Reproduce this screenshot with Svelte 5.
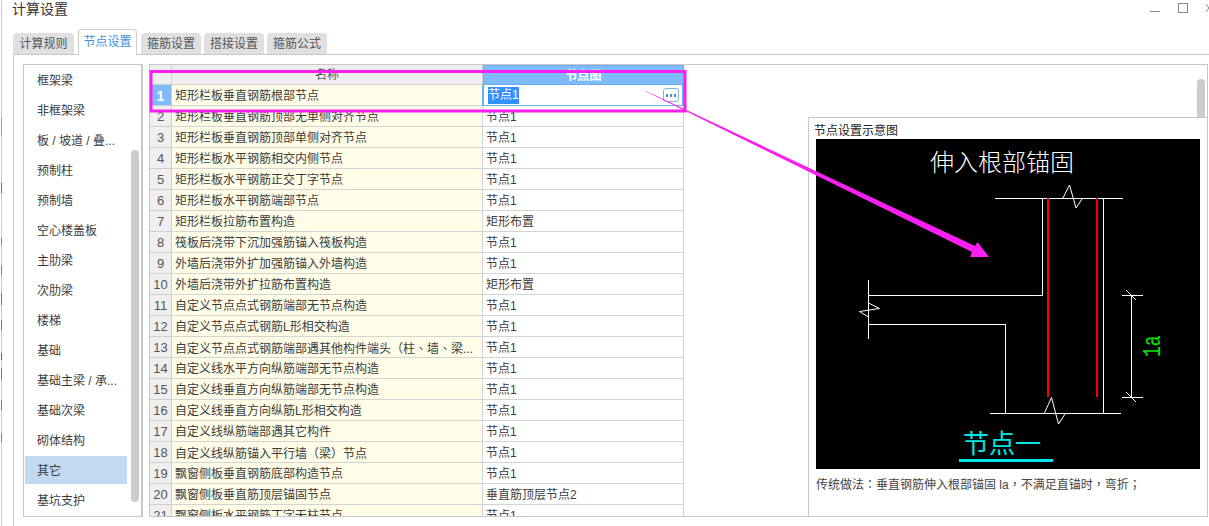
<script>
  const tabs = ['计算规则', '节点设置', '箍筋设置', '搭接设置', '箍筋公式'];
  const kinds = ['框架梁', '非框架梁', '板 / 坡道 / 叠...', '预制柱', '预制墙', '空心楼盖板', '主肋梁', '次肋梁', '楼梯', '基础', '基础主梁 / 承...', '基础次梁', '砌体结构', '其它', '基坑支护'];
  const rows = [
    ['矩形栏板垂直钢筋根部节点', '节点1'],
    ['矩形栏板垂直钢筋顶部无单侧对齐节点', '节点1'],
    ['矩形栏板垂直钢筋顶部单侧对齐节点', '节点1'],
    ['矩形栏板水平钢筋相交内侧节点', '节点1'],
    ['矩形栏板水平钢筋正交丁字节点', '节点1'],
    ['矩形栏板水平钢筋端部节点', '节点1'],
    ['矩形栏板拉筋布置构造', '矩形布置'],
    ['筏板后浇带下沉加强筋锚入筏板构造', '节点1'],
    ['外墙后浇带外扩加强筋锚入外墙构造', '节点1'],
    ['外墙后浇带外扩拉筋布置构造', '矩形布置'],
    ['自定义节点点式钢筋端部无节点构造', '节点1'],
    ['自定义节点点式钢筋L形相交构造', '节点1'],
    ['自定义节点点式钢筋端部遇其他构件端头（柱、墙、梁...', '节点1'],
    ['自定义线水平方向纵筋端部无节点构造', '节点1'],
    ['自定义线垂直方向纵筋端部无节点构造', '节点1'],
    ['自定义线垂直方向纵筋L形相交构造', '节点1'],
    ['自定义线纵筋端部遇其它构件', '节点1'],
    ['自定义线纵筋锚入平行墙（梁）节点', '节点1'],
    ['飘窗侧板垂直钢筋底部构造节点', '节点1'],
    ['飘窗侧板垂直筋顶层锚固节点', '垂直筋顶层节点2'],
    ['飘窗侧板水平钢筋丁字无柱节点', '节点1']
  ];

  // punctuation sits centred in the original font, the TC face does that too
  const parts = (s) => s.split(/([：，；、（）])/);
  const isPunct = (s) => /^[：，；、（）]$/.test(s);
</script>

{#snippet label(text)}
  {#each parts(text) as part}{#if isPunct(part)}<span class="punct">{part}</span>{:else}{part}{/if}{/each}
{/snippet}

<div class="window">
  <div class="edge"></div>
  <div class="main">
    <header class="titlebar">
      <span class="title">计算设置</span>
      <div class="controls">
        <svg width="59" height="16" viewBox="0 0 59 16" fill="none" stroke="#8a8a8a">
          <path d="M0 11.5H10" />
          <rect x="28.5" y="3.5" width="9" height="9" />
          <path d="M56 4L59 8L56 12" />
        </svg>
      </div>
    </header>

    <nav class="tabs">
      {#each tabs as tab, i}
        <div class="tab" class:active={i === 1}>{tab}</div>
      {/each}
    </nav>

    <section class="panel">
      <aside class="kinds">
        <ul>
          {#each kinds as kind}
            <li class:current={kind === '其它'}>{kind}</li>
          {/each}
        </ul>
        <div class="kinds-thumb"></div>
      </aside>

      <div class="content">
        <div class="grid">
          <div class="cell corner"></div>
          <div class="cell head">名称</div>
          <div class="cell head blue">节点图</div>
          {#each rows as row, i}
            <div class="cell num" class:on={i === 0}>{i + 1}</div>
            <div class="cell name">{@render label(row[0])}</div>
            {#if i === 0}
              <div class="cell value editing">
                <span class="selected">{row[1]}</span>
                <button class="more" aria-label="更多">
                  <svg width="10" height="3" viewBox="0 0 10 3" fill="#4a90d9">
                    <rect x="0" y="0" width="2" height="3" />
                    <rect x="4" y="0" width="2" height="3" />
                    <rect x="8" y="0" width="2" height="3" />
                  </svg>
                </button>
              </div>
            {:else}
              <div class="cell value">{row[1]}</div>
            {/if}
          {/each}
        </div>

        <div class="side">
          <div class="side-thumb"></div>
          <div class="preview">
            <div class="preview-title">节点设置示意图</div>
            <svg class="drawing" width="384" height="330" viewBox="816 139 384 330" shape-rendering="crispEdges">
              <rect x="816" y="139" width="384" height="330" fill="#000" />
              <text x="1002" y="171" class="cad-title">伸入根部锚固</text>
              <g fill="none" stroke="#fff" stroke-width="1">
                <path d="M995 198.5H1123M1042.5 198.5V295.5H868.5M868.5 280V339M868.5 324.5H1005.5V413.5M990 413.5H1121M1103.5 198.5V413.5" />
                <path d="M1131.5 295V397M1122 295.5H1143M1122 397.5H1143" />
              </g>
              <g fill="none" stroke="#fff" stroke-width="1" shape-rendering="auto">
                <path d="M1063 198L1069.5 185L1076 208L1082 199" />
                <path d="M868.5 303L879.5 308.5L859.5 311.5L868.5 317" />
                <path d="M1044.5 413L1051.5 397.5L1058.5 424L1065 414" />
                <path d="M1126 290L1136 300M1126 392L1136 402" />
              </g>
              <path d="M1048 198V397M1097 198V397" stroke="#f00" stroke-width="2" />
              <text x="0" y="0" transform="translate(1160 357) rotate(-90) scale(0.72 1)" class="cad-dim">1a</text>
              <text x="963" y="453" class="cad-name">节点一</text>
              <rect x="959" y="459" width="94" height="3" fill="#00e6e6" />
            </svg>
            <p class="note">{@render label('传统做法：垂直钢筋伸入根部锚固 la，不满足直锚时，弯折；')}</p>
          </div>
        </div>
      </div>
    </section>
  </div>

  <svg class="markup" width="1209" height="526" viewBox="0 0 1209 526">
    <rect x="151" y="71.5" width="534" height="39.5" fill="none" stroke="#f81ff0" stroke-width="3" />
    <path d="M646 91L975 246L977.5 242L989 257H970L972 252L646 91.6Z" fill="#f81ff0" />
  </svg>
</div>

<style>
  :global(body) {
    margin: 0;
    background: #fff;
  }

  .window {
    position: relative;
    display: flex;
    width: 1209px;
    height: 526px;
    overflow: hidden;
    background: #fff;
    color: #3c3c3c;
    font-family: "Liberation Sans", "Noto Sans CJK SC", sans-serif;
    font-size: 12px;
  }

  .edge {
    width: 1px;
    margin-left: 1px;
    background: linear-gradient(
      180deg,
      #c8c8c8 0 118px,
      #6aa5e0 118px 135px,
      #c8c8c8 135px 183px,
      #a8603a 183px 193px,
      #bcd3ee 193px 226px,
      #c8c8c8 226px 238px,
      #a07a50 238px 245px,
      #c8c8c8 245px 265px,
      #a87838 265px 275px,
      #c8c8c8 275px 293px,
      #5578b8 293px 305px,
      #c8c8c8 305px 320px,
      #5578b8 320px 330px,
      #c8c8c8 330px 353px,
      #806850 353px 360px,
      #c8c8c8 360px 368px,
      #a87838 368px 380px,
      #c8c8c8 380px 400px,
      #907860 400px 410px,
      #c8c8c8 410px 433px,
      #a87838 433px 442px,
      #c8c8c8 442px
    );
  }

  .main {
    flex: 1;
    display: flex;
    flex-direction: column;
    min-width: 0;
    padding-left: 11px;
  }

  .titlebar {
    display: flex;
    justify-content: space-between;
    height: 29px;
  }

  .title {
    margin-left: -1px;
    font-size: 14px;
    line-height: 19px;
    color: #333;
  }

  .controls svg {
    display: block;
  }

  .tabs {
    display: flex;
    align-items: flex-end;
    gap: 3px;
    height: 25px;
  }

  .tab {
    box-sizing: border-box;
    width: 60px;
    height: 21px;
    border-radius: 4px 4px 0 0;
    background: #e0e0e0;
    color: #555;
    line-height: 23px;
    text-align: center;
  }

  .tab:first-child {
    width: 61px;
  }

  .tab.active {
    position: relative;
    z-index: 1;
    width: 59px;
    height: 26px;
    margin: 0 1px -1px;
    border: 1px solid #ccc;
    border-bottom: none;
    background: #fff;
    color: #3f8fdc;
    line-height: 25px;
  }

  .panel {
    flex: 1;
    display: flex;
    gap: 6px;
    min-height: 0;
    padding: 9px 1px 9px 9px;
    border-top: 1px solid #c8c8c8;
    border-left: 1px solid #c8c8c8;
  }

  .kinds {
    box-sizing: border-box;
    display: flex;
    flex: none;
    width: 120px;
    border: 1px solid #c8c8c8;
    border-right-width: 2px;
    overflow: hidden;
  }

  .kinds ul {
    width: 102px;
    margin: 0 0 0 1px;
    padding: 1px 0 0;
    list-style: none;
  }

  .kinds li {
    height: 28px;
    margin-bottom: 2px;
    padding-left: 12px;
    line-height: 30px;
    white-space: nowrap;
  }

  .kinds li.current {
    background: #c1d9f1;
  }

  .kinds-thumb {
    flex: none;
    width: 8px;
    height: 352px;
    margin: 85px 0 0 4px;
    border-radius: 4px;
    background: #ccc;
  }

  .content {
    box-sizing: border-box;
    flex: 1;
    display: flex;
    min-width: 0;
    border: 1px solid #c8c8c8;
    overflow: hidden;
  }

  .grid {
    display: grid;
    flex: none;
    grid-template-columns: 22px 311px 201px;
    grid-auto-rows: 21px;
    grid-template-rows: 20px;
    width: 534px;
    height: 100%;
    overflow: hidden;
  }

  .cell {
    box-sizing: border-box;
    min-width: 0;
    border-right: 1px solid #d4d4d4;
    border-bottom: 1px solid #d4d4d4;
    line-height: 22px;
    white-space: nowrap;
    overflow: hidden;
  }

  .corner,
  .head,
  .num {
    background: #efefef;
    border-color: #cfcfcf;
    text-align: center;
    color: #555;
  }

  .head {
    line-height: 21px;
  }

  .head.blue {
    background: #7fbbfb;
    border: 1px solid #6aaef0;
    color: #fff;
    font-weight: 700;
    line-height: 20px;
  }

  .num {
    font-size: 13px;
  }

  .num.on {
    background: #7fbbfb;
    color: #fff;
    font-size: 14px;
    font-weight: 700;
  }

  .name {
    padding-left: 3px;
    background: #fffde8;
  }

  .punct {
    font-family: "Noto Sans CJK TC", sans-serif;
  }

  .value {
    padding-left: 3px;
    background: #fff;
  }

  .value.editing {
    display: flex;
    align-items: center;
    justify-content: space-between;
    padding: 0 3px;
    border: 1px solid #6aaeee;
    border-top: none;
    border-right-width: 2px;
    box-shadow: -1px 0 0 #6aaeee;
  }

  .selected {
    margin-left: 1px;
    background: #3390ff;
    color: #fff;
    line-height: 17px;
  }

  .more {
    display: flex;
    align-items: center;
    justify-content: center;
    box-sizing: border-box;
    width: 16px;
    height: 14px;
    padding: 0;
    border: 1px solid #7fb4e8;
    border-radius: 3px;
    background: #fff;
  }

  .side {
    flex: 1;
    display: flex;
    flex-direction: column;
    align-items: flex-end;
    min-width: 0;
  }

  .side-thumb {
    flex: none;
    width: 8px;
    height: 38px;
    margin: 14px 2px 0 0;
    border-radius: 4px 4px 0 0;
    background: #ccc;
  }

  .preview {
    box-sizing: border-box;
    flex: 1;
    width: 399px;
    border-top: 1px solid #c8c8c8;
    border-left: 1px solid #c8c8c8;
    padding: 5px 7px 0;
  }

  .preview-title {
    margin-left: -2px;
    height: 16px;
    color: #222;
    line-height: 16px;
  }

  .drawing {
    display: block;
  }

  .note {
    margin: 6px 0 0;
    color: #444;
    line-height: 17px;
  }

  .cad-title {
    fill: #fff;
    font-size: 24px;
    text-anchor: middle;
    font-weight: 300;
  }

  .cad-dim {
    fill: #00e600;
    font-family: "Liberation Mono", monospace;
    font-size: 25px;
  }

  .cad-name {
    fill: #00e6e6;
    font-size: 26px;
  }

  .markup {
    position: absolute;
    top: 0;
    left: 0;
    pointer-events: none;
  }
</style>
